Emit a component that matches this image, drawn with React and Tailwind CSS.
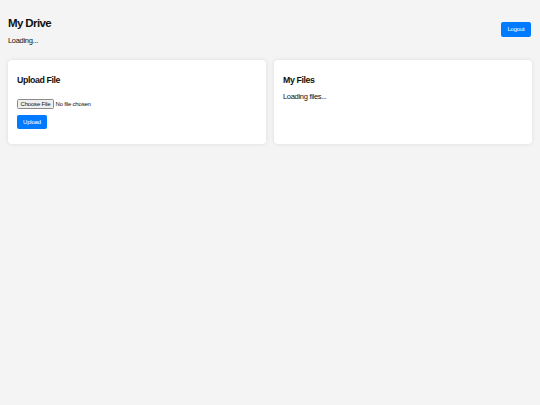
export default function App() {
  return (
    <div className="min-h-screen w-full bg-[#f4f4f4] px-[8px] pt-[16px] text-[#111]" style={{ fontFamily: '"Liberation Sans", Arial, sans-serif' }}>
      <div className="flex items-center justify-between">
        <div className="flex flex-col">
          <h1 className="text-[11.5px] leading-[14px] font-bold tracking-[-0.6px]">My Drive</h1>
          <p className="mt-[5.9px] text-[7.5px] leading-[10px] tracking-[-0.3px]">Loading...</p>
        </div>
        <button className="mr-[1px] mb-[2px] h-[15px] w-[30px] rounded-[2px] bg-[#007bff] text-[6px] leading-[15px] tracking-[-0.2px] text-white">Logout</button>
      </div>
      <div className="mt-[14.1px] grid grid-cols-2 gap-[8px]">
        <div className="rounded-[4px] bg-white px-[9px] pt-[15.2px] pb-[15px] shadow-[0_0_4px_rgba(0,0,0,0.1)]">
          <h3 className="text-[8.8px] leading-[11px] font-bold tracking-[-0.4px]">Upload File</h3>
          <div className="mt-[13.2px] flex items-center">
            <span className="flex h-[9.5px] w-[37px] items-center justify-center rounded-[1.5px] border-[0.5px] border-[#8a8a8a] bg-[#efefef] text-[6px] leading-none tracking-[-0.2px] text-[#111]">Choose File</span>
            <span className="ml-[1.5px] text-[6px] leading-none tracking-[-0.2px]">No file chosen</span>
          </div>
          <button className="mt-[6px] block h-[14.5px] w-[30px] rounded-[2px] bg-[#007bff] text-[6px] leading-[14.5px] tracking-[-0.2px] text-white">Upload</button>
        </div>
        <div className="rounded-[4px] bg-white px-[9px] pt-[15.2px] pb-[15px] shadow-[0_0_4px_rgba(0,0,0,0.1)]">
          <h3 className="text-[8.8px] leading-[11px] font-bold tracking-[-0.4px]">My Files</h3>
          <p className="mt-[5.7px] text-[7.5px] leading-[10px] tracking-[-0.3px]">Loading files...</p>
        </div>
      </div>
    </div>
  );
}
